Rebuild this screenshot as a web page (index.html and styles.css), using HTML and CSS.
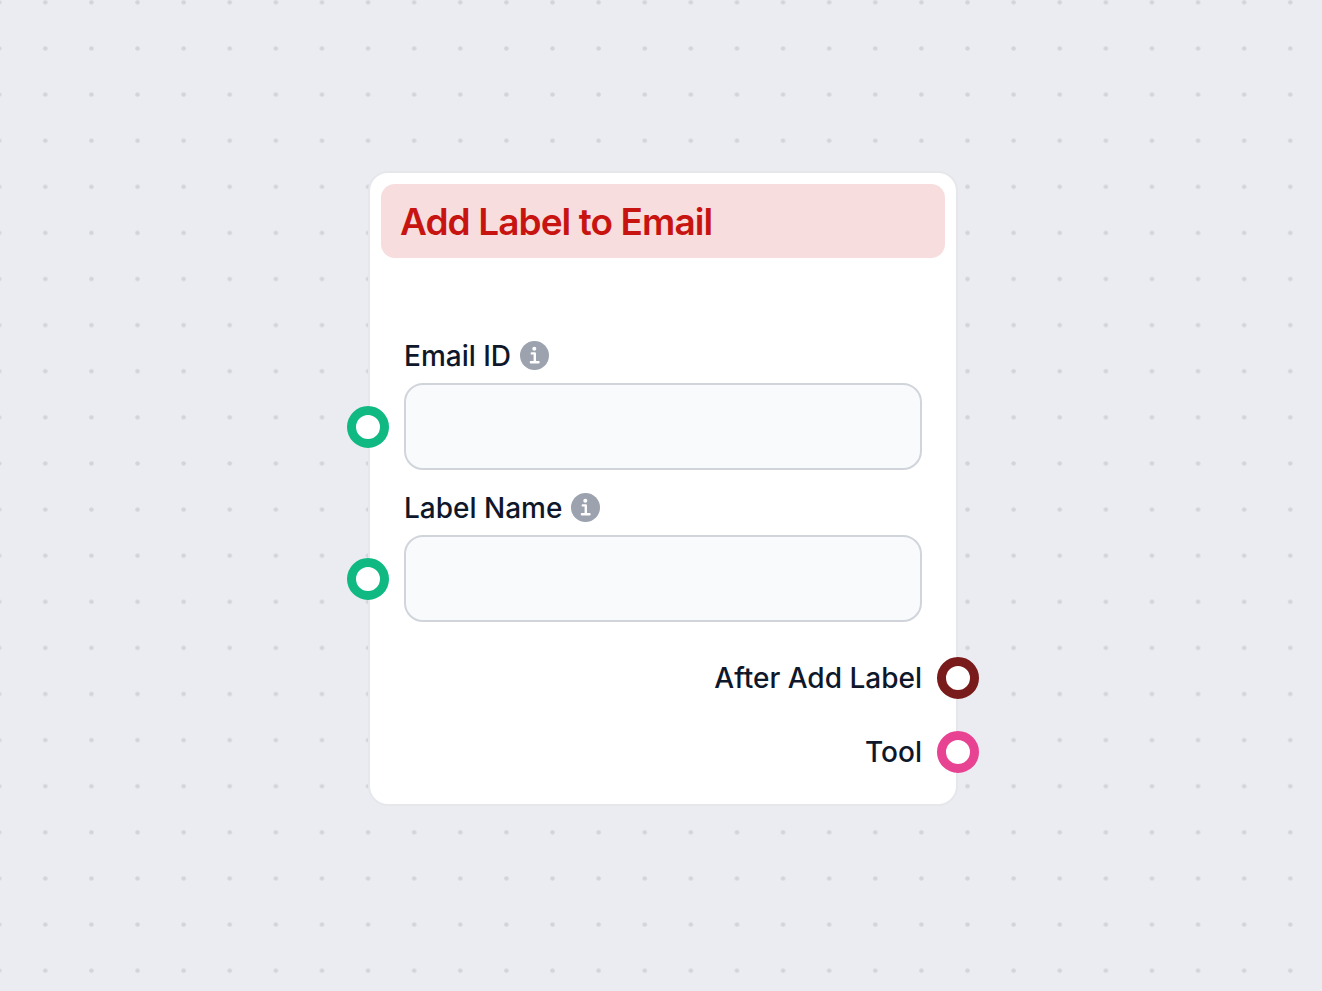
FILE: index.html
```html
<!DOCTYPE html>
<html lang="en">
<head>
<meta charset="utf-8">
<meta name="viewport" content="width=device-width, initial-scale=1">
<title>Add Label to Email</title>
<link rel="stylesheet" href="styles.css">
</head>
<body>
<main class="canvas">
  <svg class="grid" aria-hidden="true">
    <defs>
      <pattern id="dots" width="46.11" height="46.11" patternUnits="userSpaceOnUse" patternTransform="translate(22.25 -20.7)">
        <circle cx="23.05" cy="23.05" r="2.3" fill="#d1d5db"/>
      </pattern>
    </defs>
    <rect width="100%" height="100%" fill="url(#dots)"/>
  </svg>
  <form class="node">
    <header class="node-header"><h1 class="node-title">Add Label to Email</h1></header>
    <div class="fields">
      <div class="field">
        <div class="label-row">
          <label for="email-id">Email ID</label>
          <svg class="info" viewBox="0 0 29 29" aria-hidden="true"><circle cx="14.5" cy="14.5" r="14.5" fill="#9ca3af"/><circle cx="14.3" cy="7.8" r="2" fill="#fff"/><path d="M11.8 12.4h3v8.8M10.9 21.3h7.6" fill="none" stroke="#fff" stroke-width="2.4" stroke-linecap="round" stroke-linejoin="round"/></svg>
        </div>
        <div class="input-row">
          <span class="handle handle-in"></span>
          <input class="text-input" id="email-id" type="text">
        </div>
      </div>
      <div class="field">
        <div class="label-row">
          <label for="label-name">Label Name</label>
          <svg class="info" viewBox="0 0 29 29" aria-hidden="true"><circle cx="14.5" cy="14.5" r="14.5" fill="#9ca3af"/><circle cx="14.3" cy="7.8" r="2" fill="#fff"/><path d="M11.8 12.4h3v8.8M10.9 21.3h7.6" fill="none" stroke="#fff" stroke-width="2.4" stroke-linecap="round" stroke-linejoin="round"/></svg>
        </div>
        <div class="input-row">
          <span class="handle handle-in"></span>
          <input class="text-input" id="label-name" type="text">
        </div>
      </div>
    </div>
    <div class="outputs">
      <div class="output">After Add Label<span class="handle handle-after"></span></div>
      <div class="output">Tool<span class="handle handle-tool"></span></div>
    </div>
  </form>
</main>
</body>
</html>
```
FILE: styles.css
```css
* {
  box-sizing: border-box;
}

body {
  margin: 0;
  font-family: Inter, "Liberation Sans", sans-serif;
  color: #0f172a;
}

.canvas {
  position: relative;
  min-height: 100vh;
  overflow: hidden;
  background: #ebecf1;
}

.grid {
  position: absolute;
  inset: 0;
  width: 100%;
  height: 100%;
}

.node {
  position: absolute;
  left: 368px;
  top: 171px;
  width: 590px;
  padding: 11px 11px 15px;
  border: 2px solid #e5e7eb;
  border-radius: 20px;
  background: #fff;
}

.node-header {
  padding: 15px 19px 13px;
  border-radius: 14px;
  background: #f7dddd;
}

.node-title {
  margin: 0;
  font-size: 37px;
  line-height: 46px;
  font-weight: 600;
  letter-spacing: -0.025em;
  color: #c81410;
}

.fields {
  display: flex;
  flex-direction: column;
  gap: 20px;
  padding: 80px 23px 0;
}

.label-row {
  display: flex;
  align-items: center;
  gap: 9px;
  height: 35px;
  font-size: 28px;
  line-height: 32px;
  font-weight: 500;
}

.info {
  width: 29px;
  height: 29px;
}

.input-row {
  position: relative;
  padding-top: 10px;
}

.text-input {
  display: block;
  width: 100%;
  height: 87px;
  padding: 0 24px;
  border: 2px solid #d1d5db;
  border-radius: 19px;
  background: #f9fafc;
  font: inherit;
  font-size: 28px;
}

.handle {
  position: absolute;
  width: 42px;
  height: 42px;
  border: 9px solid;
  border-radius: 50%;
  background: #fff;
}

.handle-in {
  left: -57px;
  top: 33px;
  border-color: #10b981;
}

.outputs {
  display: flex;
  flex-direction: column;
  gap: 32px;
  padding: 35px 23px 16px;
}

.output {
  position: relative;
  text-align: right;
  font-size: 28px;
  line-height: 42px;
  font-weight: 500;
}

.output .handle {
  top: 0;
  right: -57px;
}

.handle-after {
  border-color: #7a1b1b;
}

.handle-tool {
  border-color: #e84393;
}
```
